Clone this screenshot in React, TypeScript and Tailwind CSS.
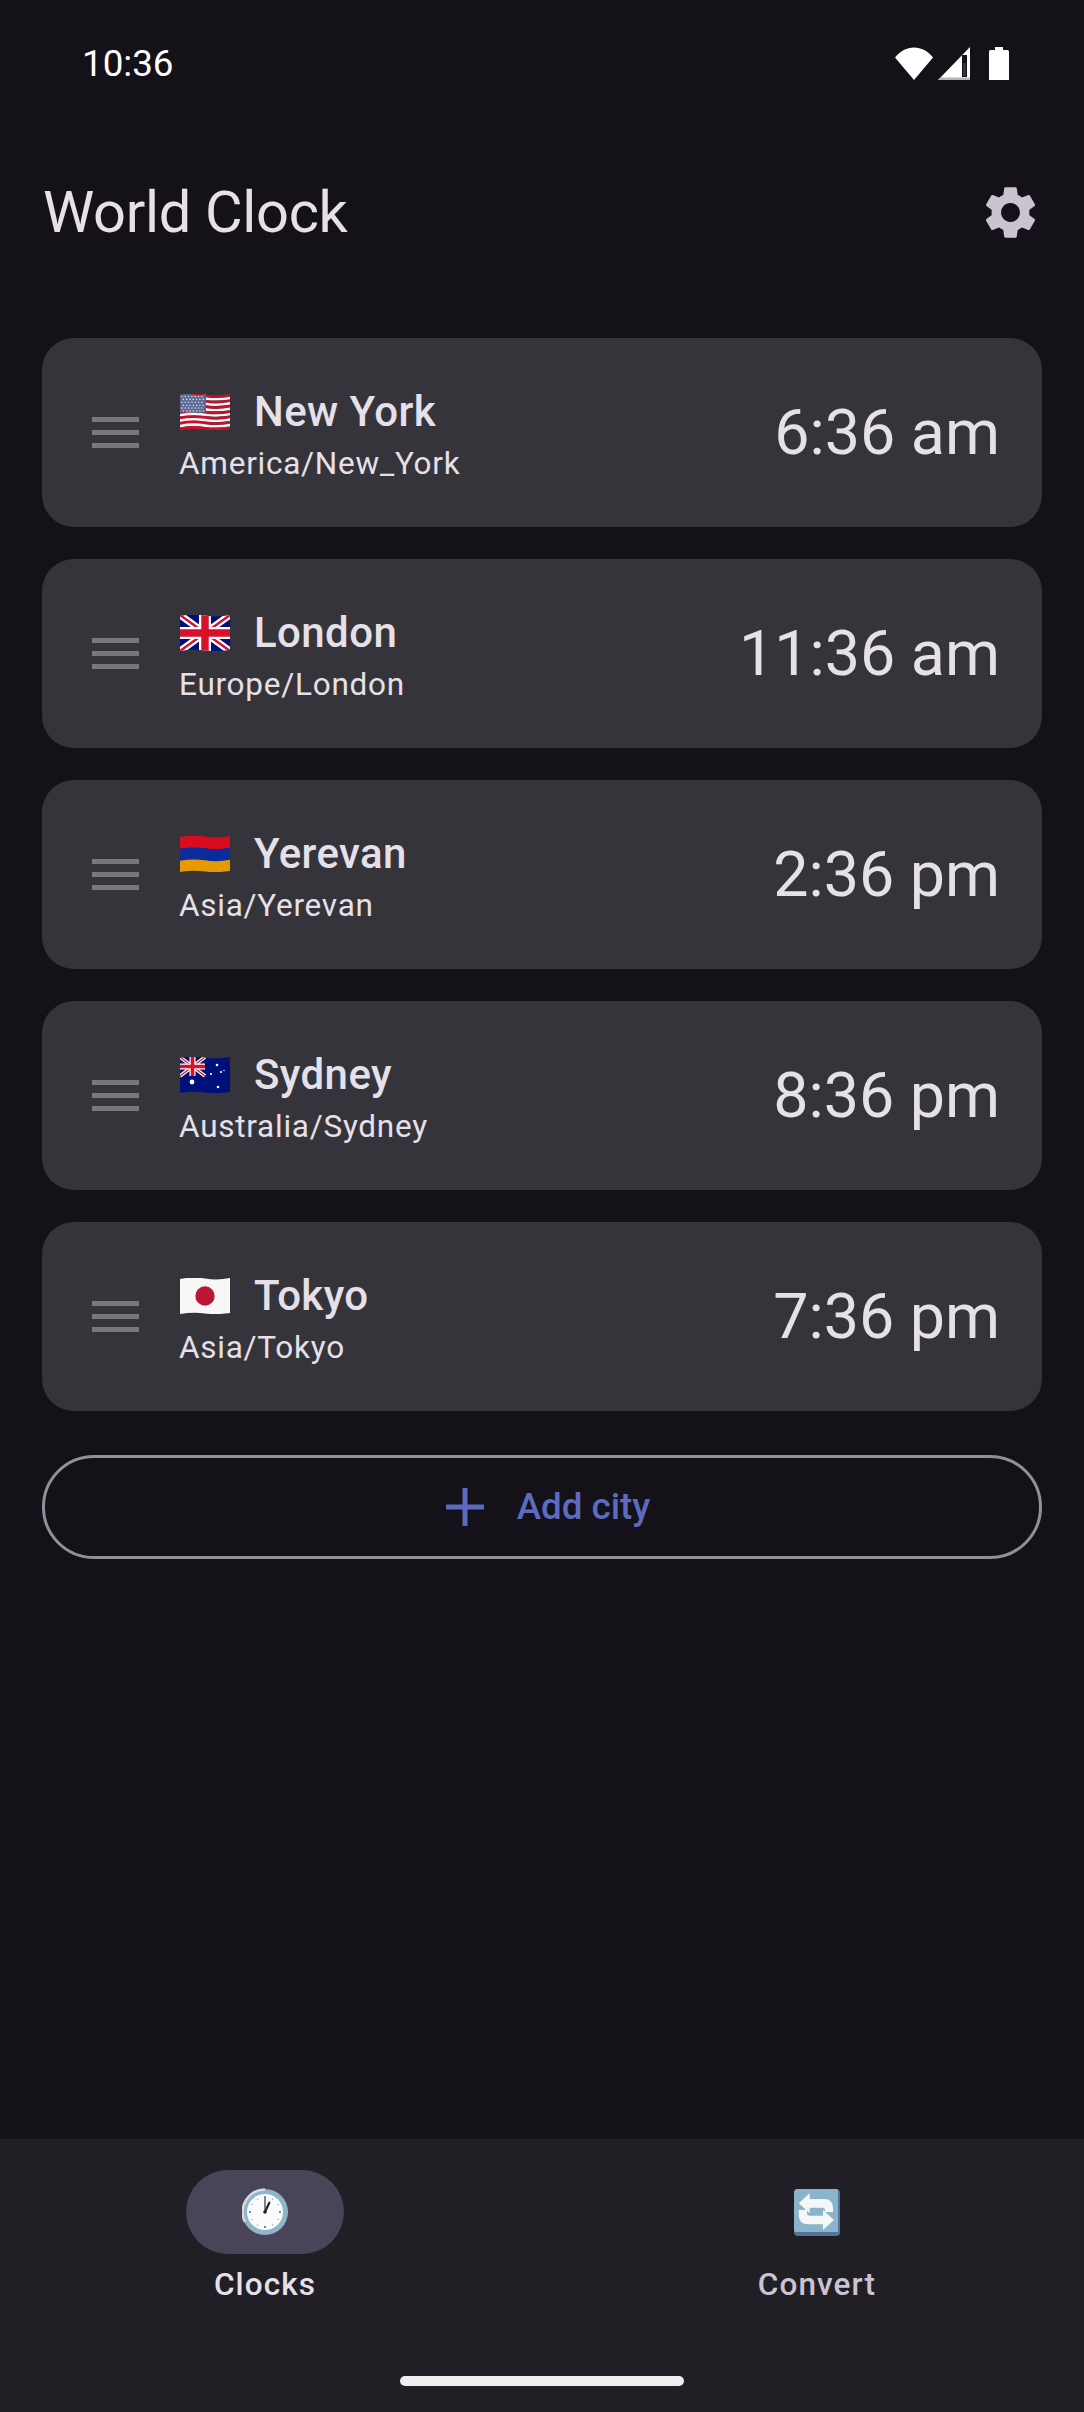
import { MdSettings } from "react-icons/md";

const font = "[font-family:Roboto,sans-serif]";

function band(y0: number, y1: number) {
  const top = `M0 ${y0 + 1} Q12 ${y0 - 1.5} 25 ${y0 + 0.5} T50 ${y0}`;
  const bottom = `L50 ${y1} Q37 ${y1 + 2} 25 ${y1 + 0.5} T0 ${y1 + 1} Z`;
  return top + " " + bottom;
}

function FlagUS() {
  const stripes = Array.from({ length: 13 }, (_, i) => i);
  const stars: [number, number][] = [];
  for (let r = 0; r < 6; r++) for (let c = 0; c < 7; c++) stars.push([2 + c * 3.3 + (r % 2) * 1.4, 2.5 + r * 2.9]);
  return (
    <svg viewBox="0 0 50 36" className="w-[50px] h-[36px]">
      {stripes.map((i) => (
        <path key={i} d={band(i * 2.7, (i + 1) * 2.7)} fill={i % 2 === 0 ? "#c8102e" : "#f5f5f5"} />
      ))}
      <path d={band(0, 18)} fill="#5b6a94" transform="scale(0.52 1)" />
      {stars.map(([x, y], i) => (
        <circle key={i} cx={x} cy={y} r="0.8" fill="#d8dbe6" />
      ))}
    </svg>
  );
}

function FlagUK() {
  return (
    <svg viewBox="0 0 50 36" className="w-[50px] h-[36px]">
      <clipPath id="uk">
        <path d={band(0, 35)} />
      </clipPath>
      <g clipPath="url(#uk)">
        <rect width="50" height="36" fill="#00107a" />
        <path d="M0 0L50 36M50 0L0 36" stroke="#fff" strokeWidth="7" />
        <path d="M0 0L50 36M50 0L0 36" stroke="#d8102a" strokeWidth="2.4" />
        <path d="M25 0V36M0 18H50" stroke="#fff" strokeWidth="12" />
        <path d="M25 0V36M0 18H50" stroke="#d8102a" strokeWidth="7.5" />
      </g>
    </svg>
  );
}

function FlagAM() {
  return (
    <svg viewBox="0 0 50 36" className="w-[50px] h-[36px]">
      <path d={band(0, 12)} fill="#d90b1f" />
      <path d={band(11.8, 24)} fill="#0a2c9c" />
      <path d={band(23.8, 35)} fill="#e59a04" />
    </svg>
  );
}

function FlagAU() {
  const stars: [number, number, number][] = [
    [37, 8, 1.3],
    [31, 17, 1.1],
    [41, 15, 1.1],
    [38, 30, 1.3],
    [12, 25, 2.4],
    [44, 13.5, 0.7],
  ];
  return (
    <svg viewBox="0 0 50 36" className="w-[50px] h-[36px]">
      <clipPath id="au">
        <path d={band(0, 35)} />
      </clipPath>
      <g clipPath="url(#au)">
        <rect width="50" height="36" fill="#00107a" />
        <g>
          <path d="M0 0L25 19M25 0L0 19" stroke="#fff" strokeWidth="3.5" />
          <path d="M0 0L25 19M25 0L0 19" stroke="#d8102a" strokeWidth="1.2" />
          <path d="M12.5 0V19M0 9.5H25" stroke="#fff" strokeWidth="6" />
          <path d="M12.5 0V19M0 9.5H25" stroke="#d8102a" strokeWidth="3.6" />
        </g>
        {stars.map(([x, y, r], i) => (
          <circle key={i} cx={x} cy={y} r={r} fill="#fff" />
        ))}
      </g>
    </svg>
  );
}

function FlagJP() {
  return (
    <svg viewBox="0 0 50 36" className="w-[50px] h-[36px]">
      <path d={band(0, 35)} fill="#f7f7f7" />
      <circle cx="25" cy="18" r="9.7" fill="#bc1535" />
    </svg>
  );
}

function ClockIcon() {
  return (
    <svg viewBox="0 0 46 48" className="w-[46px] h-[48px]">
      <circle cx="23" cy="24" r="23" fill="#8fb6c8" />
      <path d="M23 1.5A22.5 22.5 0 0 0 3 34" fill="none" stroke="#d5d9e2" strokeWidth="2.5" />
      <circle cx="23" cy="24" r="18" fill="#fbfbfb" />
      {Array.from({ length: 12 }, (_, i) => {
        const a = (i * Math.PI) / 6;
        return <circle key={i} cx={23 + 15 * Math.sin(a)} cy={24 - 15 * Math.cos(a)} r={i % 3 === 0 ? 1.1 : 0.6} fill="#5a7286" />;
      })}
      <path d="M23 24V10" stroke="#30343a" strokeWidth="1.2" />
      <path d="M23 24L27.3 14.7" stroke="#22252a" strokeWidth="2.2" strokeLinecap="round" />
      <circle cx="23" cy="24" r="1.8" fill="#22252a" />
    </svg>
  );
}

function ConvertIcon() {
  return (
    <svg viewBox="0 0 46 47" className="w-[46px] h-[47px]">
      <rect width="46" height="47" rx="4" fill="#56749b" />
      <path d="M0 4a4 4 0 0 1 4-4h38a2 2 0 0 1 2 2v41H2a2 2 0 0 1-2-2Z" fill="#8ab4c9" />
      <path d="M4.7 14.3L15.7 4.3V10H30Q39 10 39 19V23H31V21Q31 18.7 28 18.7H15.7V24.3Z" fill="#f4f6f7" />
      <path d="M40 31L29 41V35.3H14Q4.7 35.3 4.7 26V21H13V24Q13 26.7 16 26.7H29V21Z" fill="#f4f6f7" />
    </svg>
  );
}

const cities = [
  { name: "New York", zone: "America/New_York", time: "6:36 am", Flag: FlagUS },
  { name: "London", zone: "Europe/London", time: "11:36 am", Flag: FlagUK },
  { name: "Yerevan", zone: "Asia/Yerevan", time: "2:36 pm", Flag: FlagAM },
  { name: "Sydney", zone: "Australia/Sydney", time: "8:36 pm", Flag: FlagAU },
  { name: "Tokyo", zone: "Asia/Tokyo", time: "7:36 pm", Flag: FlagJP },
];

export default function App() {
  return (
    <div className={`w-[1084px] h-[2412px] bg-[#141218] flex flex-col overflow-hidden ${font}`}>
      {/* Status bar */}
      <div className="h-[126px] shrink-0 flex items-start justify-between pt-[42px] pl-[82px] pr-[75px]">
        <span className="text-[36.75px] leading-[43px] text-white">10:36</span>
        <div className="flex items-start gap-[5px] pt-[5px]">
          <svg viewBox="0 0 38 33" className="w-[38px] h-[33px]">
            <path d="M19 33L0 10.5C5 4 12 0.5 19 0.5S33 4 38 10.5Z" fill="#fff" />
          </svg>
          <svg viewBox="0 0 32 33" className="w-[32px] h-[33px]">
            <path d="M32 0V33H0Z" fill="#fff" />
            <rect x="24" y="8" width="5" height="22" fill="#141218" />
            <rect x="25" y="16" width="3" height="13" fill="#36343b" />
            <path d="M3 30.5H32V33H0Z" fill="#b5b5b8" />
          </svg>
          <svg viewBox="0 0 20 33" className="w-[20px] h-[33px] ml-[14px]">
            <path d="M6 0H14V3H18.5Q20 3 20 4.5V33H0V4.5Q0 3 1.5 3H6Z" fill="#fff" />
          </svg>
        </div>
      </div>

      {/* Header */}
      <div className="h-[212px] shrink-0 flex items-start justify-between pl-[43px] pr-[42px] pt-[52px]">
        <h1 className="text-[57.75px] leading-[68px] tracking-[-0.3px] text-[#e6e0e9] font-normal">World Clock</h1>
        <MdSettings className="w-[63px] h-[63px] text-[#cac4d0] mt-[3px]" />
      </div>

      {/* City list */}
      <div className="flex flex-col gap-[32px] px-[42px]">
        {cities.map(({ name, zone, time, Flag }) => (
          <div key={name} className="h-[189px] bg-[#36343b] rounded-[32px] flex items-center pl-[50px] pr-[42px]">
            <div className="w-[47px] flex flex-col gap-[8px] shrink-0">
              <div className="h-[5px] bg-[#79767d]" />
              <div className="h-[5px] bg-[#79767d]" />
              <div className="h-[5px] bg-[#79767d]" />
            </div>
            <div className="ml-[41px] flex-1 flex flex-col pt-[6px]">
              <div className="flex items-center gap-[24px]">
                <Flag />
                <span className="text-[42px] leading-[50px] tracking-[0.4px] font-medium text-[#e6e0e9]">{name}</span>
              </div>
              <span className="text-[31.5px] leading-[40px] tracking-[0.75px] text-[#e6e0e9] mt-[7px] -ml-[1px]">{zone}</span>
            </div>
            <span className="text-[62.75px] leading-[74px] text-[#e6e0e9]">{time}</span>
          </div>
        ))}

        <div className="h-[104px] mt-[12px] pl-[12px] rounded-full border-[3px] border-[#938f99] flex items-center justify-center gap-[33px]">
          <svg viewBox="0 0 38 38" className="w-[38px] h-[38px]">
            <path d="M16.5 0H21.5V16.5H38V21.5H21.5V38H16.5V21.5H0V16.5H16.5Z" fill="#5c6bc0" />
          </svg>
          <span className="text-[36.75px] leading-[44px] font-medium text-[#5c6bc0]">Add city</span>
        </div>
      </div>

      <div className="flex-1" />

      {/* Bottom navigation */}
      <div className="h-[273px] shrink-0 bg-[#211f26] relative flex pt-[31px]">
        <div className="w-[530px] flex flex-col items-center">
          <div className="w-[158px] h-[84px] rounded-full bg-[#4a4458] flex items-center justify-center">
            <ClockIcon />
          </div>
          <span className="text-[31.5px] leading-[40px] tracking-[1.1px] font-medium text-[#e6e0e9] mt-[11px]">Clocks</span>
        </div>
        <div className="flex-1 pl-[20px] flex flex-col items-center">
          <div className="h-[84px] flex items-center justify-center">
            <ConvertIcon />
          </div>
          <span className="text-[31.5px] leading-[40px] tracking-[1.1px] font-medium text-[#cac4d0] mt-[11px]">Convert</span>
        </div>
        <div className="absolute left-[400px] top-[237px] w-[284px] h-[10px] rounded-full bg-[#eeeeee]" />
      </div>
    </div>
  );
}
